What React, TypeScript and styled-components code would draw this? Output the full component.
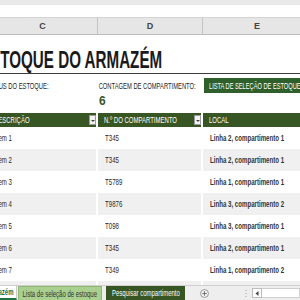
import React from "react";
import styled, { createGlobalStyle } from "styled-components";

const GlobalStyle = createGlobalStyle`
  html, body {
    margin: 0;
    padding: 0;
    background: #ffffff;
    overflow: hidden;
  }
  body {
    font-family: "Liberation Sans", Arial, sans-serif;
  }
`;

const COLS = "110px 105px 108px";
const GREEN = "#375623";

type Row = { desc: string; bin: string; place: string };

const rows: Row[] = [
  { desc: "Item 1", bin: "T345", place: "Linha 2, compartimento 1" },
  { desc: "Item 2", bin: "T345", place: "Linha 2, compartimento 1" },
  { desc: "Item 3", bin: "T5789", place: "Linha 1, compartimento 1" },
  { desc: "Item 4", bin: "T9876", place: "Linha 3, compartimento 2" },
  { desc: "Item 5", bin: "T098", place: "Linha 3, compartimento 1" },
  { desc: "Item 6", bin: "T345", place: "Linha 2, compartimento 1" },
  { desc: "Item 7", bin: "T349", place: "Linha 1, compartimento 2" },
];

export default function App() {
  return (
    <>
      <GlobalStyle />
      <Window>
        <TopStrip />
        <FormulaBar />
        <ColumnHeaders>
          <ColumnLetter>C</ColumnLetter>
          <ColumnLetter>D</ColumnLetter>
          <ColumnLetter $last>E</ColumnLetter>
        </ColumnHeaders>

        <Sheet>
          <TitleRow>
            <Title>ESTOQUE DO ARMAZÉM</Title>
          </TitleRow>

          <LabelRow>
            <Label $shift>STATUS DO ESTOQUE:</Label>
            <Label>CONTAGEM DE COMPARTIMENTO:</Label>
            <GreenButton>
              <Narrow $k={0.66}>LISTA DE SELEÇÃO DE ESTOQUE</Narrow>
            </GreenButton>
          </LabelRow>

          <ValueRow>
            <span />
            <Count>6</Count>
            <span />
          </ValueRow>

          <TableHead>
            <HeadCell>
              <Narrow>DESCRIÇÃO</Narrow>
              <Dropdown />
            </HeadCell>
            <HeadCell>
              <Narrow>N.º DO COMPARTIMENTO</Narrow>
              <Dropdown />
            </HeadCell>
            <HeadCell $last>
              <Narrow>LOCAL</Narrow>
            </HeadCell>
          </TableHead>

          {rows.map((r, i) => (
            <DataRow key={i} $shaded={i % 2 === 1}>
              <Cell>
                <Narrow>{r.desc}</Narrow>
              </Cell>
              <Cell>
                <Narrow>{r.bin}</Narrow>
              </Cell>
              <Cell $strong $last>
                <Narrow>{r.place}</Narrow>
              </Cell>
            </DataRow>
          ))}
          <DataRow $shaded>
            <Cell />
            <Cell />
            <Cell $last />
          </DataRow>
        </Sheet>

        <TabBar>
          <Tab $kind="active">
            <Narrow $origin="right">Estoque do armazém</Narrow>
          </Tab>
          <Tab $kind="light">
            <Narrow $origin="center">Lista de seleção de estoque</Narrow>
          </Tab>
          <Tab $kind="dark">
            <Narrow $origin="center">Pesquisar compartimento</Narrow>
          </Tab>
          <AddSheet>
            <svg width="9" height="9" viewBox="0 0 9 9">
              <circle cx="4.5" cy="4.5" r="4" fill="none" stroke="#8a8a8a" strokeWidth="0.8" />
              <path d="M4.5 2.3v4.4M2.3 4.5h4.4" stroke="#6a6a6a" strokeWidth="0.9" />
            </svg>
          </AddSheet>
          <Splitter>
            <svg width="2" height="9" viewBox="0 0 2 9">
              <circle cx="1" cy="1.5" r="0.6" fill="#9a9a9a" />
              <circle cx="1" cy="4.5" r="0.6" fill="#9a9a9a" />
              <circle cx="1" cy="7.5" r="0.6" fill="#9a9a9a" />
            </svg>
          </Splitter>
          <ScrollArrow>
            <svg width="4" height="5" viewBox="0 0 4 5">
              <path d="M3.5 0L0.5 2.5L3.5 5Z" fill="#444" />
            </svg>
          </ScrollArrow>
          <ScrollTrack />
        </TabBar>
      </Window>
    </>
  );
}

// text in the sheet is drawn very condensed, squeeze it horizontally
const Narrow = styled.span<{ $origin?: "left" | "center" | "right"; $k?: number }>`
  display: inline-block;
  white-space: nowrap;
  transform: scaleX(${(p) => p.$k ?? 0.68});
  transform-origin: ${(p) => p.$origin ?? "left"} center;
`;

const Window = styled.div`
  width: 300px;
  height: 300px;
  display: flex;
  flex-direction: column;
  overflow: hidden;
  background: #fff;
`;

const TopStrip = styled.div`
  height: 5px;
  background: #e9e9e9;
  flex-shrink: 0;
`;

const FormulaBar = styled.div`
  height: 12px;
  background: #fff;
  border-bottom: 1px solid #d4d4d4;
  flex-shrink: 0;
`;

const ColumnHeaders = styled.div`
  display: grid;
  grid-template-columns: ${COLS};
  margin-left: -12px;
  height: 16px;
  background: #e6e6e6;
  border-bottom: 1px solid #bdbdbd;
  flex-shrink: 0;
`;

const ColumnLetter = styled.div<{ $last?: boolean }>`
  display: flex;
  align-items: center;
  justify-content: center;
  font-size: 9px;
  font-weight: bold;
  color: #444;
  border-right: ${(p) => (p.$last ? "none" : "1px solid #c4c4c4")};
`;

const Sheet = styled.div`
  flex: 1;
  min-height: 0;
  overflow: hidden;
  margin-left: -12px;
  width: 323px;
`;

const TitleRow = styled.div`
  height: 38px;
  display: flex;
  align-items: flex-end;
  border-bottom: 1.5px solid #3c3c3c;
`;

const Title = styled.h1`
  margin: 0 0 1px -8px;
  font-size: 23px;
  font-weight: bold;
  color: #1a1a1a;
  line-height: 24px;
  white-space: nowrap;
  transform: scaleX(0.66);
  transform-origin: left center;
`;

const LabelRow = styled.div`
  display: grid;
  grid-template-columns: ${COLS};
  height: 15px;
  margin-top: 4px;
  align-items: center;
`;

const Label = styled.div<{ $shift?: boolean }>`
  font-size: 8.8px;
  color: #262626;
  padding-left: 1px;
  margin-left: ${(p) => (p.$shift ? "-4px" : "0")};
  white-space: nowrap;
  transform: scaleX(0.66);
  transform-origin: left center;
`;

const GreenButton = styled.div`
  height: 15px;
  margin-left: 1px;
  background: #2f5f2a;
  color: #fff;
  font-size: 8.6px;
  display: flex;
  align-items: center;
  padding-left: 5px;
  overflow: hidden;
`;

const ValueRow = styled.div`
  display: grid;
  grid-template-columns: ${COLS};
  height: 16px;
  align-items: center;
`;

const Count = styled.div`
  font-size: 12px;
  font-weight: bold;
  color: #385723;
  padding-left: 1px;
`;

const TableHead = styled.div`
  display: grid;
  grid-template-columns: ${COLS};
  height: 14px;
  margin-top: 4px;
`;

const HeadCell = styled.div<{ $last?: boolean }>`
  position: relative;
  background: ${GREEN};
  color: #fff;
  font-size: 8.8px;
  display: flex;
  align-items: center;
  padding-left: 6px;
  border-right: ${(p) => (p.$last ? "none" : "2px solid #fff")};
`;

const Dropdown = styled.span`
  position: absolute;
  right: 0;
  top: 2px;
  width: 7px;
  height: 10px;
  background: #f3f3f3;
  border: 1px solid #9a9a9a;
  box-sizing: border-box;
  &::after {
    content: "";
    position: absolute;
    left: 0.5px;
    top: 3.5px;
    border-left: 2px solid transparent;
    border-right: 2px solid transparent;
    border-top: 2px solid #444;
  }
`;

const DataRow = styled.div<{ $shaded: boolean }>`
  display: grid;
  grid-template-columns: ${COLS};
  height: 22px;
  background: ${(p) => (p.$shaded ? "#f0f0f0" : "#ffffff")};
`;

const Cell = styled.div<{ $strong?: boolean; $last?: boolean }>`
  display: flex;
  align-items: center;
  padding-left: 7px;
  font-size: 9px;
  font-weight: ${(p) => (p.$strong ? "bold" : "normal")};
  color: ${(p) => (p.$strong ? "#333" : "#2a2a2a")};
  border-right: ${(p) => (p.$last ? "none" : "2px solid #fff")};
`;

const TabBar = styled.div`
  height: 14px;
  flex-shrink: 0;
  display: flex;
  align-items: stretch;
  background: #eeeeee;
  border-top: 1px solid #cfcfcf;
`;

const Tab = styled.div<{ $kind: "active" | "light" | "dark" }>`
  display: flex;
  align-items: center;
  font-size: 8.8px;
  box-sizing: border-box;
  overflow: hidden;
  ${(p) =>
    p.$kind === "active"
      ? `
    justify-content: flex-end;
    padding-right: 3px;
    margin-left: -8px;
    width: 25px;
    background: #fff;
    color: #217346;
    font-weight: bold;
    border-bottom: 2px solid #217346;
    border-right: 1px solid #c8c8c8;
  `
      : p.$kind === "light"
      ? `
    justify-content: center;
    margin-left: 1px;
    width: 84px;
    background: #a9d08e;
    color: #333;
    border: 1px solid #8fb878;
    border-bottom: none;
  `
      : `
    justify-content: center;
    margin-left: 4px;
    width: 79px;
    background: #375623;
    color: #fff;
  `}
`;

const AddSheet = styled.div`
  display: flex;
  align-items: center;
  margin-left: 15px;
`;

const Splitter = styled.div`
  display: flex;
  align-items: center;
  margin-left: 36px;
`;

const ScrollArrow = styled.div`
  display: flex;
  align-items: center;
  justify-content: center;
  margin-left: 5px;
  margin-top: 2px;
  margin-bottom: 2px;
  width: 8px;
  background: #fff;
  border: 1px solid #bdbdbd;
`;

const ScrollTrack = styled.div`
  flex: 1;
  margin: 2px 0;
  background: #fff;
  border: 1px solid #cfcfcf;
  border-left: none;
`;
